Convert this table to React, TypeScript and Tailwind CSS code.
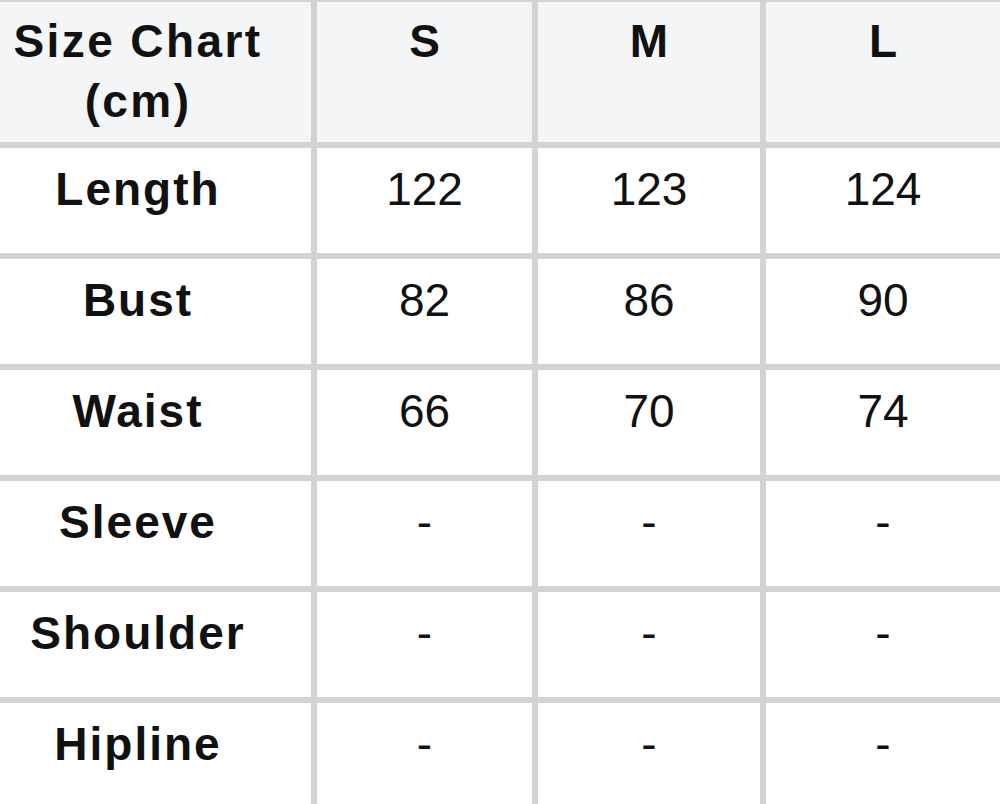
const sizes = ["S", "M", "L"];

const rows = [
  { label: "Length", values: ["122", "123", "124"] },
  { label: "Bust", values: ["82", "86", "90"] },
  { label: "Waist", values: ["66", "70", "74"] },
  { label: "Sleeve", values: ["-", "-", "-"] },
  { label: "Shoulder", values: ["-", "-", "-"] },
  { label: "Hipline", values: ["-", "-", "-"] },
];

export default function App() {
  return (
    <main
      className="h-[804px] w-[1000px] overflow-hidden bg-[#d3d3d3] pt-[2px] text-[#111111]"
      style={{ fontFamily: '"Liberation Sans", Arial, sans-serif' }}
    >
      <div className="grid grid-cols-[311px_215px_222px_1fr] gap-[6px] text-[46px] leading-[60px]">
        <div className="h-[140px] bg-[#f4f5f7] pt-[9px] pr-[35px] text-center font-bold tracking-[2.4px]">
          Size Chart
          <br />
          (cm)
        </div>
        {sizes.map((s) => (
          <div key={s} className="h-[140px] bg-[#f4f5f7] pt-[9px] text-center font-bold">
            {s}
          </div>
        ))}

        {rows.map((row) => (
          <div key={row.label} className="contents">
            <div className="h-[105px] bg-white pt-[11px] pr-[35px] text-center font-bold tracking-[2px]">
              {row.label}
            </div>
            {row.values.map((v, i) => (
              <div key={i} className="h-[105px] bg-white pt-[11px] text-center">
                {v}
              </div>
            ))}
          </div>
        ))}
      </div>
    </main>
  );
}
